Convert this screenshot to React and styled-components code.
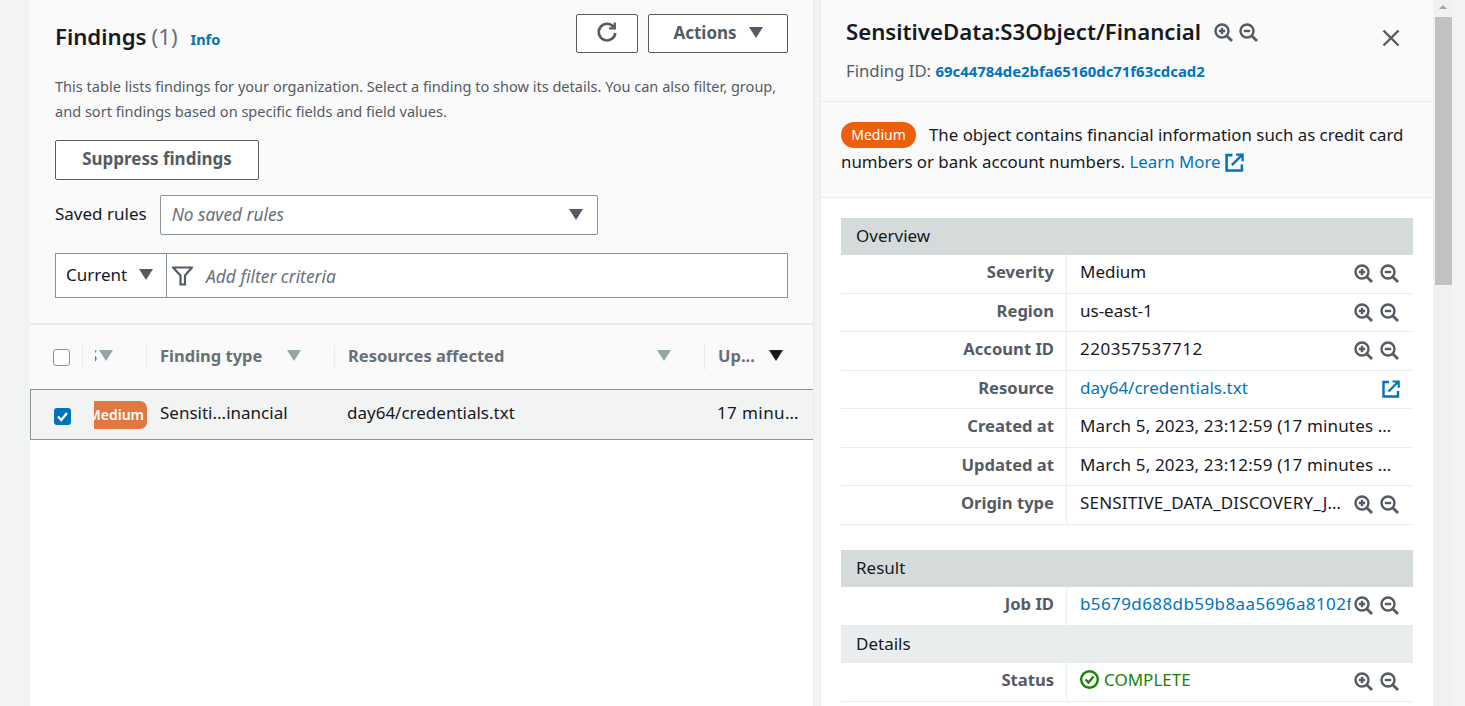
import React from "react"
import styled, { createGlobalStyle } from "styled-components"

const GlobalStyle = createGlobalStyle`
  html, body {
    margin: 0;
    padding: 0;
    height: 100%;
    overflow: hidden;
    background: #f2f3f3;
  }
  body {
    font-family: "Noto Sans", "Open Sans", sans-serif;
    font-size: 17px;
    color: #16191f;
  }
  * {
    box-sizing: border-box;
  }
`

const ZoomInIcon = () => (
  <svg width="19" height="19" viewBox="0 0 19 19" fill="none" stroke="#545b64" strokeWidth="2.400">
    <circle cx="8" cy="8" r="6.500" />
    <path d="M12.700 12.700 18 18" strokeWidth="2.800" />
    <path d="M4.800 8h6.400M8 4.800v6.400" />
  </svg>
)

const ZoomOutIcon = () => (
  <svg width="19" height="19" viewBox="0 0 19 19" fill="none" stroke="#545b64" strokeWidth="2.400">
    <circle cx="8" cy="8" r="6.500" />
    <path d="M12.700 12.700 18 18" strokeWidth="2.800" />
    <path d="M4.800 8h6.400" />
  </svg>
)

const ExternalGlyph = styled.svg`
  vertical-align: -4px;
  flex-shrink: 0;
`

const ExternalIcon = ({ size = 18 }) => (
  <ExternalGlyph width={size} height={size} viewBox="0 0 18 18" fill="none" stroke="#0073bb" strokeWidth="2.400">
    <path d="M7 2H1.500v14.500H16V11" />
    <path d="M6.500 11.500 16 2M10.500 1.500h6.200v6.200" strokeWidth="2.200" />
  </ExternalGlyph>
)

const Caret = styled.span`
  display: inline-block;
  flex-shrink: 0;
  width: 0;
  height: 0;
  border-left: 7px solid transparent;
  border-right: 7px solid transparent;
  border-top: 11px solid ${(p) => p.$color || "#545b64"};
`

const Page = styled.div`
  display: flex;
  height: 706px;
  width: 1465px;
  overflow: hidden;
  padding-left: 30px;
`

const Main = styled.main`
  width: 784px;
  flex-shrink: 0;
  background: #fff;
  border-right: 1px solid #eaeded;
  display: flex;
  flex-direction: column;
`

const Head = styled.section`
  background: #fafafa;
  height: 325px;
  padding: 14px 25px 0;
  border-bottom: 2px solid #eaeded;
`

const TitleRow = styled.div`
  display: flex;
  justify-content: space-between;
  height: 60px;
`

const Title = styled.h1`
  margin: 8px 0 0;
  font-size: 22.200px;
  line-height: 30px;
  font-weight: 600;
  display: flex;
  align-items: baseline;
`

const Count = styled.span`
  font-weight: 400;
  color: #687078;
  margin-left: 5px;
`

const InfoLink = styled.a`
  font-size: 14.500px;
  font-weight: 700;
  color: #0073bb;
  margin-left: 13px;
`

const Actions = styled.div`
  display: flex;
  gap: 10px;
`

const Button = styled.button`
  height: ${(p) => p.$height || 39}px;
  width: ${(p) => p.$width}px;
  background: #fff;
  border: 1px solid #545b64;
  border-radius: 2px;
  font: 700 17px "Noto Sans", sans-serif;
  color: #545b64;
  display: flex;
  align-items: center;
  justify-content: center;
  gap: 12px;
  padding: 0 0 3px;
`

const Description = styled.p`
  margin: 0;
  font-size: 14.550px;
  line-height: 25px;
  color: #545b64;
  height: 50px;
`

const SuppressRow = styled.div`
  margin-top: 16px;
`

const RulesRow = styled.div`
  display: flex;
  align-items: center;
  margin-top: 15px;
  gap: 13px;
`

const RulesLabel = styled.span`
  margin-bottom: 3px;
`

const SelectBox = styled.div`
  width: 438px;
  height: 40px;
  background: #fff;
  border: 1px solid #879596;
  border-radius: 2px;
  display: flex;
  align-items: center;
  justify-content: space-between;
  padding: 0 14px 2px 11px;
  font-size: 17.300px;
  font-style: italic;
  color: #687078;
`

const FilterRow = styled.div`
  display: flex;
  height: 45px;
  margin-top: 18px;
  background: #fff;
  border: 1px solid #879596;
`

const CurrentBox = styled.div`
  width: 111px;
  border-right: 1px solid #879596;
  display: flex;
  align-items: center;
  gap: 12px;
  padding: 0 0 2px 10px;
`

const FilterInput = styled.div`
  flex: 1;
  display: flex;
  align-items: center;
  gap: 13px;
  padding-left: 5px;
  font-size: 17.400px;
  font-style: italic;
  color: #687078;
`

const tableColumns = "52px 64px 188px 370px 109px"

const TableHeader = styled.div`
  display: grid;
  grid-template-columns: ${tableColumns};
  height: 64px;
  background: #fafafa;
  align-items: center;
`

const HeadCell = styled.div`
  height: 25px;
  display: flex;
  align-items: center;
  justify-content: space-between;
  padding: 0 ${(p) => p.$right || 33}px 4px 13px;
  border-left: 1px solid #eaeded;
  font-size: 16.500px;
  font-weight: 700;
  color: #687078;
  white-space: nowrap;
  overflow: hidden;
`

const SeverityHead = styled(HeadCell)`
  justify-content: flex-start;
  gap: 2px;
  padding-left: 12px;
`

const ClippedName = styled.span`
  width: 3px;
  overflow: hidden;
  display: flex;
  justify-content: flex-end;
`

const CheckCell = styled.div`
  padding-left: 23px;
  display: flex;
  align-items: center;
`

const EmptyBox = styled.span`
  width: 17px;
  height: 17px;
  background: #fff;
  border: 1px solid #879596;
  border-radius: 3px;
`

const CheckedBox = styled.span`
  width: 17px;
  height: 17px;
  margin-top: 4px;
  background: #0073bb;
  border-radius: 3px;
  display: flex;
  align-items: center;
  justify-content: center;
`

const TableRow = styled.div`
  display: grid;
  grid-template-columns: ${tableColumns};
  height: 51px;
  background: #f2f3f3;
  border: 1px solid #879596;
  border-right: 0;
  align-items: center;
  white-space: nowrap;
`

const BadgeCell = styled.div`
  margin-left: 11px;
  width: 53px;
  height: 28px;
  background: #e07941;
  border-radius: 0 7px 7px 0;
  overflow: hidden;
  display: flex;
  align-items: center;
  justify-content: flex-end;
  padding-right: 3px;
  color: #fff;
  font-size: 14px;
  font-weight: 600;
`

const TextCell = styled.div`
  padding: 0 ${(p) => p.$right || 0}px 4px ${(p) => p.$pad || 13}px;
  overflow: hidden;
  text-overflow: ellipsis;
  letter-spacing: ${(p) => p.$spread || 0}px;
`

const Gap = styled.div`
  width: 6px;
  flex-shrink: 0;
`

const Panel = styled.aside`
  width: 613px;
  flex-shrink: 0;
  background: #fff;
  border-left: 1px solid #eaeded;
`

const PanelHeader = styled.header`
  height: 102px;
  background: #fafafa;
  border-bottom: 1px solid #eaeded;
  padding: 17px 24px 0 25px;
  position: relative;
`

const PanelTitle = styled.h2`
  margin: 0;
  font-size: 22.200px;
  line-height: 30px;
  font-weight: 600;
  display: flex;
  align-items: center;
`

const TitleIcons = styled.span`
  display: inline-flex;
  gap: 6px;
  margin-left: 13px;
`

const CloseButton = styled.span`
  position: absolute;
  top: 29px;
  right: 33px;
  line-height: 0;
`

const FindingId = styled.div`
  margin-top: 14px;
  line-height: 20px;
  font-size: 16.700px;
  color: #545b64;
`

const IdLink = styled.a`
  font-size: 14.900px;
  font-weight: 700;
  color: #0073bb;
`

const Summary = styled.section`
  height: 96px;
  background: #fafafa;
  border-bottom: 1px solid #eaeded;
  padding: 19px 20px 0;
  font-size: 16.850px;
  line-height: 27px;
`

const SeverityPill = styled.span`
  display: inline-block;
  vertical-align: top;
  height: 26px;
  width: 75px;
  line-height: 26px;
  margin: 1px 13px 0 0;
  border-radius: 14px;
  text-align: center;
  background: #ec5f0c;
  color: #fff;
  font-size: 14px;
`

const BlueLink = styled.a`
  color: #0073bb;
`

const Body = styled.div`
  padding: 20px 20px 0;
`

const SectionHead = styled.div`
  height: ${(p) => p.$height || 37}px;
  margin-top: ${(p) => p.$top || 0}px;
  background: ${(p) => (p.$light ? "#eaeded" : "#d5dbdb")};
  padding: 0 0 2px 15px;
  display: flex;
  align-items: center;
`

const Row = styled.div`
  display: grid;
  grid-template-columns: 225px 1fr;
  height: 38.500px;
  border-bottom: ${(p) => (p.$plain ? "0" : "1px solid #eaeded")};
`

const RowLabel = styled.div`
  text-align: right;
  padding-right: 12px;
  font-size: 16.600px;
  font-weight: 700;
  color: #545b64;
  line-height: 34px;
`

const RowValue = styled.div`
  border-left: 1px solid #eaeded;
  padding: 0 ${(p) => p.$right || 14}px 0 13px;
  display: flex;
  align-items: center;
  justify-content: space-between;
  gap: 3px;
  min-width: 0;
`

const ValueText = styled.span`
  flex: 1;
  min-width: 0;
  white-space: nowrap;
  overflow: hidden;
  color: ${(p) => p.$color || "#16191f"};
  letter-spacing: ${(p) => p.$spread || 0}px;
  margin-top: -4px;
  display: flex;
  align-items: center;
  gap: 5px;
`

const Ellipsis = styled.span`
  overflow: hidden;
  text-overflow: ellipsis;
`

const RowIcons = styled.span`
  display: inline-flex;
  flex-shrink: 0;
  gap: 7px;
`

const ScrollTrack = styled.div`
  width: 19px;
  flex-shrink: 0;
  background: #f1f1f1;
  padding: 17px 0 0 2px;
  position: relative;
`

const ScrollArrow = styled.span`
  position: absolute;
  top: 5px;
  left: 6px;
  width: 0;
  height: 0;
  border-left: 4px solid transparent;
  border-right: 4px solid transparent;
  border-bottom: 4px solid #a3a3a3;
`

const ScrollThumb = styled.div`
  height: 268px;
  background: #c1c1c1;
`

const rowsOverview = [
  { label: "Severity", value: "Medium" },
  { label: "Region", value: "us-east-1" },
  { label: "Account ID", value: "220357537712", spread: 0.5 },
  { label: "Resource", value: "day64/credentials.txt", link: true },
  { label: "Created at", value: "March 5, 2023, 23:12:59 (17 minutes ago)", noIcons: true, spread: 0.17 },
  { label: "Updated at", value: "March 5, 2023, 23:12:59 (17 minutes ago)", noIcons: true, spread: 0.17 },
  { label: "Origin type", value: "SENSITIVE_DATA_DISCOVERY_JOB", spread: 0.2 },
]

const ZoomPair = () => (
  <RowIcons>
    <ZoomInIcon />
    <ZoomOutIcon />
  </RowIcons>
)

const rowPadding = (row) => {
  if (row.noIcons) return 20
  return row.link ? 13 : 14
}

const App = () => {
  return (
    <>
      <GlobalStyle />
      <Page>
        <Main>
          <Head>
            <TitleRow>
              <Title>
                Findings<Count>(1)</Count>
                <InfoLink>Info</InfoLink>
              </Title>
              <Actions>
                <Button $width={62}>
                  <svg width="22" height="22" viewBox="0 0 22 22" fill="none" stroke="#545b64" strokeWidth="2.600">
                    <path d="M17.600 6A8.300 8.300 0 1 0 19.300 12" />
                    <path d="M18.800 1.500v5.800H13" strokeWidth="2.200" />
                  </svg>
                </Button>
                <Button $width={140}>
                  Actions <Caret />
                </Button>
              </Actions>
            </TitleRow>
            <Description>
              This table lists findings for your organization. Select a finding to show its details. You can also filter, group,
              and sort findings based on specific fields and field values.
            </Description>
            <SuppressRow>
              <Button $width={204} $height={40}>Suppress findings</Button>
            </SuppressRow>
            <RulesRow>
              <RulesLabel>Saved rules</RulesLabel>
              <SelectBox>
                No saved rules
                <Caret />
              </SelectBox>
            </RulesRow>
            <FilterRow>
              <CurrentBox>
                Current <Caret />
              </CurrentBox>
              <FilterInput>
                <svg width="21" height="20" viewBox="0 0 21 20" fill="none" stroke="#545b64" strokeWidth="2.200">
                  <path d="M1 1.500h19l-7 8v9H8.500v-9z" />
                </svg>
                Add filter criteria
              </FilterInput>
            </FilterRow>
          </Head>
          <TableHeader>
            <CheckCell>
              <EmptyBox />
            </CheckCell>
            <SeverityHead>
              <ClippedName>S</ClippedName>
              <Caret $color="#95a5a6" />
            </SeverityHead>
            <HeadCell>
              Finding type
              <Caret $color="#95a5a6" />
            </HeadCell>
            <HeadCell>
              Resources affected
              <Caret $color="#95a5a6" />
            </HeadCell>
            <HeadCell $right={30}>
              Up...
              <Caret $color="#16191f" />
            </HeadCell>
          </TableHeader>
          <TableRow>
            <CheckCell>
              <CheckedBox>
                <svg width="13" height="13" viewBox="0 0 13 13" fill="none" stroke="#fff" strokeWidth="2.400">
                  <path d="M2 6.500 5.300 10 11 3" />
                </svg>
              </CheckedBox>
            </CheckCell>
            <BadgeCell>Medium</BadgeCell>
            <TextCell>Sensiti...inancial</TextCell>
            <TextCell $pad={12}>day64/credentials.txt</TextCell>
            <TextCell $pad={12} $right={13} $spread={0.4}>17 minutes ago</TextCell>
          </TableRow>
        </Main>
        <Gap />
        <Panel>
          <PanelHeader>
            <PanelTitle>
              SensitiveData:S3Object/Financial
              <TitleIcons>
                <ZoomInIcon />
                <ZoomOutIcon />
              </TitleIcons>
            </PanelTitle>
            <CloseButton>
              <svg width="18" height="18" viewBox="0 0 18 18" fill="none" stroke="#545b64" strokeWidth="2.400">
                <path d="M1.500 1.500 16.500 16.500M16.500 1.500 1.500 16.500" />
              </svg>
            </CloseButton>
            <FindingId>
              Finding ID: <IdLink>69c44784de2bfa65160dc71f63cdcad2</IdLink>
            </FindingId>
          </PanelHeader>
          <Summary>
            <SeverityPill>Medium</SeverityPill>
            The object contains financial information such as credit card numbers or bank account numbers.{" "}
            <BlueLink>Learn More</BlueLink> <ExternalIcon size={19} />
          </Summary>
          <Body>
            <SectionHead>Overview</SectionHead>
            {rowsOverview.map((row) => (
              <Row key={row.label}>
                <RowLabel>{row.label}</RowLabel>
                <RowValue $right={rowPadding(row)}>
                  <ValueText $color={row.link ? "#0073bb" : undefined} $spread={row.spread}>
                    <Ellipsis>{row.value}</Ellipsis>
                  </ValueText>
                  {row.link ? <ExternalIcon /> : row.noIcons ? null : <ZoomPair />}
                </RowValue>
              </Row>
            ))}
            <SectionHead $top={25}>Result</SectionHead>
            <Row $plain>
              <RowLabel>Job ID</RowLabel>
              <RowValue>
                <ValueText $color="#0073bb" $spread={0.4}>b5679d688db59b8aa5696a8102f8a5b1</ValueText>
                <ZoomPair />
              </RowValue>
            </Row>
            <SectionHead $light $height={38}>Details</SectionHead>
            <Row>
              <RowLabel>Status</RowLabel>
              <RowValue>
                <ValueText $color="#1d8102">
                  <svg width="19" height="19" viewBox="0 0 19 19" fill="none" stroke="#1d8102" strokeWidth="2.400">
                    <circle cx="9.500" cy="9.500" r="8.300" />
                    <path d="M5.500 9.500 8.500 12.500 13.500 6.500" />
                  </svg>
                  COMPLETE
                </ValueText>
                <ZoomPair />
              </RowValue>
            </Row>
          </Body>
        </Panel>
        <ScrollTrack>
          <ScrollArrow />
          <ScrollThumb />
        </ScrollTrack>
      </Page>
    </>
  )
}

export default App
